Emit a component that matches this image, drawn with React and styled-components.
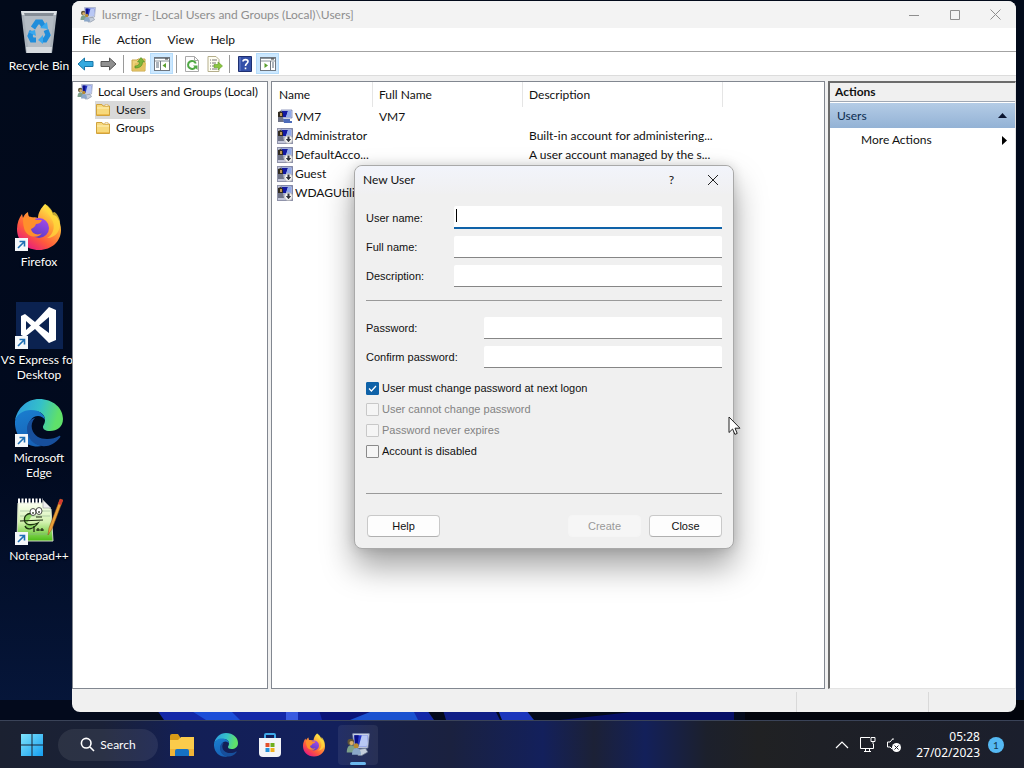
import React from "react";
import styled, {createGlobalStyle, css} from "styled-components";

const GlobalStyle = createGlobalStyle`
* {
  box-sizing: border-box;
}
html, body, #root {
  height: 100%;
}
body {
  margin: 0;
  overflow: hidden;
  font-family: Lato, "Open Sans", sans-serif;
  font-size: 12px;
  line-height: 16px;
  color: #111;
  cursor: default;
}
button, input {
  font: inherit;
  color: inherit;
  margin: 0;
  padding: 0;
  border: 0;
  background: none;
}
svg {
  display: block;
  flex: none;
}`;

/* ---------- DESKTOP ---------- */

const Screen = styled.div`
display: flex;
flex-direction: column;
height: 100vh;
background: linear-gradient(180deg, #020a1a 0%, #010a1f 60%, #06163a 92%, #030a1c 100%);
`;

const Workspace = styled.main`
position: relative;
display: flex;
flex: 1;
min-height: 0;
padding: 1px 8px 8px 0;
`;

const Wallpaper = styled.svg`
position: absolute;
left: 0;
bottom: 0;
width: 100%;
height: 20px;
`;

const DesktopIcons = styled.nav`
position: relative;
width: 72px;
flex: none;
`;

const IconGrid = styled.div`
display: grid;
width: 78px;
grid-template-columns: 78px;
grid-auto-rows: 98px;
`;

const Shortcut = styled.button`
position: relative;
grid-row: ${props => props.$row};
display: flex;
flex-direction: column;
align-items: center;
justify-content: flex-start;
gap: 3px;
padding-top: 6px;
color: white;
line-height: 15px;
white-space: pre;
text-shadow: 0 1px 2px black;
`;

const ShortcutArrow = styled.svg`
position: absolute;
left: 15px;
top: 41px;
`;

const Taskbar = styled.footer`
display: flex;
align-items: center;
height: 48px;
flex: none;
padding: 0 20px 0 14px;
border-top: 1px solid #3a4358;
color: white;
background: linear-gradient(90deg, #1b2131 0%, #1a2137 10%, #131f56 18%, #13205c 33%, #182148 37%, #1a213f 44%, #13205c 53%, #1c2136 58%, #13205a 63%, #1c202c 69%, #202123 74%, #1e2026 80%, #1b1f2d 100%);
`;

const StartButton = styled.button`
display: grid;
place-items: center;
width: 36px;
height: 40px;
margin-right: 8px;
`;

const SearchButton = styled.button`
display: flex;
align-items: center;
justify-content: center;
gap: 5px;
width: 100px;
height: 32px;
border-radius: 16px;
background: rgba(255, 255, 255, 0.08);
`;

const TaskButton = styled.button`
position: relative;
display: grid;
place-items: center;
width: 40px;
height: 40px;
margin-left: 4px;
border-radius: 4px;
${props => props.$active && css`
  background: rgba(255, 255, 255, 0.07);
  &::after {
    content: "";
    position: absolute;
    left: 12px;
    bottom: 0;
    width: 16px;
    height: 3px;
    border-radius: 2px;
    background: #6cb8ee;
  }
`}
`;

const Tray = styled.div`
display: flex;
align-items: center;
margin-left: auto;
`;

const TrayIcons = styled.div`
display: flex;
align-items: center;
gap: 10px;
`;

const Clock = styled.time`
margin: 0 8px 0 14px;
text-align: right;
font-family: "Noto Sans", "Open Sans", sans-serif;
`;

const Notice = styled.button`
width: 16px;
height: 16px;
border-radius: 50%;
background: #55b9f3;
color: #12384f;
font-size: 10px;
line-height: 16px;
`;

/* ---------- CONSOLE WINDOW ---------- */

const Window = styled.section`
position: relative;
display: flex;
flex-direction: column;
flex: 1;
min-width: 0;
border-radius: 8px;
background: #f0f0f0;
`;

const TitleBar = styled.header`
display: flex;
align-items: center;
gap: 6px;
height: 27px;
flex: none;
padding-left: 8px;
border-radius: 8px 8px 0 0;
background: #f3f3f3;
color: #8e8e8e;
`;

const WindowControls = styled.div`
display: flex;
margin-left: auto;
`;

const WindowControl = styled.button`
display: grid;
place-items: center;
width: 41px;
height: 27px;
`;

const MenuBar = styled.nav`
display: flex;
height: 24px;
flex: none;
padding-left: 2px;
border-bottom: 1px solid #a3a3a3;
background: white;
`;

const MenuItem = styled.button`
padding: 0 8px;
`;

const ToolBar = styled.div`
display: flex;
align-items: center;
height: 24px;
flex: none;
padding-left: 2px;
border-bottom: 1px solid #dcdcdc;
background: white;
`;

const ToolButton = styled.button`
display: grid;
place-items: center;
width: 23px;
height: 21px;
${props => props.$on && css`
  background: #cce8ff;
  box-shadow: inset 0 0 0 1px #b5dcfb;
`}
`;

const ToolDivider = styled.span`
width: 1px;
height: 18px;
margin: 0 3px;
background: #9a9a9a;
`;

const Panels = styled.div`
display: flex;
flex: 1;
min-height: 0;
gap: 3px;
padding-top: 5px;
`;

const Tree = styled.nav`
display: flex;
flex-direction: column;
align-items: flex-start;
width: 196px;
flex: none;
padding: 1px 0 0 4px;
border: 1px solid #828790;
background: white;
`;

const TreeNode = styled.button`
display: flex;
align-items: center;
gap: 5px;
height: 18px;
padding-right: 4px;
margin-left: ${props => props.$level * 18}px;
white-space: nowrap;
background: ${props => props.$selected ? "#d9d9d9" : "transparent"};
`;

const ListPanel = styled.div`
flex: 1;
min-width: 0;
overflow: hidden;
border: 1px solid #828790;
background: white;
`;

const UserTable = styled.table`
width: 100%;
table-layout: fixed;
border-collapse: separate;
border-spacing: 0;

th {
  height: 25px;
  padding: 0 6px;
  text-align: left;
  font-weight: normal;
  border-right: 1px solid #e5e5e5;
}
th:first-child {
  padding-left: 7px;
}
th:last-child {
  border-right: 0;
}
td {
  height: 19px;
  padding: 0 6px;
  white-space: nowrap;
}
td:first-child {
  padding: 0 0 0 5px;
}`;

const UserName = styled.span`
display: flex;
align-items: center;
gap: 2px;
`;

const ActionsPanel = styled.aside`
width: 188px;
flex: none;
border-top: 2px solid #6b6b6b;
border-left: 2px solid #6b6b6b;
border-right: 1px solid #e3e3e3;
border-bottom: 1px solid #e3e3e3;
background: white;
`;

const ActionsTitle = styled.h2`
margin: 0;
padding: 1px 5px;
height: 19px;
font-size: 12px;
line-height: 16px;
background: #f0f0f0;
border-bottom: 1px solid #a0a8b4;
`;

const ActionsGroup = styled.button`
display: flex;
align-items: center;
justify-content: space-between;
width: 100%;
height: 26px;
padding: 0 8px 0 7px;
border-top: 1px solid white;
color: #0c2c50;
background: linear-gradient(#b4cce6, #93b2d5);
`;

const ActionsItem = styled.button`
display: flex;
align-items: center;
justify-content: space-between;
width: 100%;
height: 24px;
padding: 0 8px 0 31px;
`;

const StatusBar = styled.footer`
display: flex;
justify-content: flex-end;
height: 23px;
flex: none;
padding-top: 3px;

span {
  border-left: 1px solid #d9d9d9;
}
span:first-child {
  width: 132px;
}
span:last-child {
  width: 88px;
}`;

/* ---------- NEW USER DIALOG ---------- */

const Dialog = styled.form`
position: absolute;
left: 282px;
top: 164px;
width: 380px;
border: 1px solid #a9a9a9;
border-radius: 8px;
background: #f0f0f0;
box-shadow: 0 18px 32px rgba(0, 0, 0, 0.36), 0 0 12px rgba(0, 0, 0, 0.14);
font-family: "Liberation Sans", Arial, sans-serif;
font-size: 11px;
line-height: 14px;
`;

const DialogTitle = styled.header`
display: flex;
align-items: center;
height: 28px;
padding-left: 8px;
border-radius: 8px 8px 0 0;
background: linear-gradient(#f2f4fb, #f0f0f1);
font-family: Lato, "Open Sans", sans-serif;
font-size: 12px;
line-height: 16px;
`;

const DialogBody = styled.div`
padding: 12px 11px 11px;
`;

const FieldGroup = styled.div`
display: flex;
flex-direction: column;
gap: 7px;
`;

const Field = styled.div`
position: relative;
display: grid;
grid-template-columns: ${props => props.$labelWidth}px 1fr;
align-items: center;
`;

const TextBox = styled.input`
width: 100%;
height: 22px;
padding: 0 4px;
border-bottom: 1px solid #868686;
border-radius: 2px 2px 0 0;
background: white;
outline: none;
${props => props.$focused && css`
  height: 23px;
  border-bottom: 2px solid #0f62a8;
`}
`;

const Caret = styled.span`
position: absolute;
left: 90px;
top: 3px;
width: 1px;
height: 13px;
background: black;
`;

const Rule = styled.hr`
height: 1px;
margin: ${props => props.$above}px 0 ${props => props.$below}px;
border: 0;
background: #9a9a9a;
`;

const CheckList = styled.div`
display: flex;
flex-direction: column;
gap: 7px;
margin-top: 13px;
`;

const CheckRow = styled.label`
display: flex;
align-items: center;
gap: 3px;
color: ${props => props.$disabled ? "#838383" : "#111"};
`;

const CheckBox = styled.input`
appearance: none;
width: 13px;
height: 13px;
border: 1px solid #8a8a8a;
border-radius: 1px;
background: #f5f5f5;
&:disabled {
  border-color: #c8c8c8;
}
&:checked {
  border-color: #0f62a8;
  background: #0f62a8 url("data:image/svg+xml,%3Csvg xmlns='http://www.w3.org/2000/svg' viewBox='0 0 11 11'%3E%3Cpath d='M2 5.5 4.4 8 9 3' fill='none' stroke='white' stroke-width='1.2'/%3E%3C/svg%3E");
}`;

const Buttons = styled.div`
display: flex;
gap: 8px;
padding: 0 0 0 1px;
`;

const PushButton = styled.button`
width: 73px;
height: 22px;
border: 1px solid #c9c9c9;
border-bottom-color: #b0b0b0;
border-radius: 4px;
background: #fdfdfd;
&:first-child {
  margin-right: auto;
}
&:disabled {
  border-color: #f5f5f5;
  background: #f6f6f6;
  color: #999;
}`;

const Pointer = styled.svg`
position: absolute;
left: 656px;
top: 415px;
`;

/* ---------- ICONS ---------- */

const UsersIcon = ({size = 16}) => (
  <svg width={size} height={size} viewBox="0 0 16 16">
    <path d="M4.500.5h11l-1 9.500H5.500z" fill="#dde3f2" stroke="#8c98b8" strokeWidth=".6"/>
    <path d="M5.500 1.500h9l-.6 7.500H6z" fill="#2335c4"/>
    <path d="M5.500 1.500h3l-1 7.500H6z" fill="#0a0f86"/>
    <path d="M10.500 1.500h4l-.6 7.500H8.500z" fill="#b9c8f4"/>
    <path d="M8 11l5-.8 1.500 2.500-4 2.300H8z" fill="#c5cedb" stroke="#6e7b90" strokeWidth=".5"/>
    <circle cx="3.200" cy="6" r="2.200" fill="#5e5236"/>
    <circle cx="3.700" cy="6.700" r="1.400" fill="#d9b06a"/>
    <path d="M.5 13c0-3 1-4.800 3-4.800s3 1.800 3 4.800z" fill="#7da08a"/>
    <circle cx="6.800" cy="8.500" r="1.700" fill="#b98a30"/>
    <path d="M4 14.500c0-2.500 1-4.500 3-4.500s3 2 3 4.500z" fill="#8ba7c9"/>
  </svg>
);

const AccountIcon = ({down}) => (
  <svg width="16" height="16" viewBox="0 0 16 16">
    {down ? <rect x=".5" y=".5" width="15" height="15" fill="#c3c6da" stroke="#9093aa"/> : null}
    <path d="M4 1h11v8H5z" fill="#cbd6f3" stroke="#6874a8" strokeWidth=".7"/>
    <path d="M5 2h6l-2 6H5z" fill="#1319a0"/>
    <path d="M11 2h3v6H9z" fill="#8fa8ea"/>
    <path d="M1 3l3-1 2 2v4H1z" fill="#332c21"/>
    <path d="M3 4h2v3H3z" fill="#c39a55"/>
    <path d="M1 8h5l1 5H1z" fill="#6f7488"/>
    {down
      ? <g>
        <circle cx="11.500" cy="11.500" r="4" fill="#f5f5f5" stroke="#a6a6a6" strokeWidth=".6"/>
        <path d="M10.500 8.500h2v2.500h1.700l-2.700 3.200L8.800 11h1.700z" fill="#30333c"/>
      </g>
      : <path d="M6 10h7v2h2v2H7z" fill="#4d6cba"/>}
  </svg>
);

const FolderIcon = () => (
  <svg width="16" height="16" viewBox="0 0 16 16">
    <path d="M1.500 13.500v-11H7l1 1.500h6.500v9.500z" fill="#f7d97c" stroke="#d0a23c"/>
    <path d="M2 6h12" stroke="#fff1ba"/>
    <path d="M10 2.500h3v1.500h-3z" fill="#fff" stroke="#d0a23c" strokeWidth=".5"/>
    <path d="M2 12.500h12" stroke="#eebd50"/>
  </svg>
);

const ArrowIcon = ({back}) => (
  <svg width="17" height="16" viewBox="0 0 17 16">
    <path
      d={back ? "M1 8l6.500-6v3.500H16v5H7.500V14z" : "M16 8L9.500 2v3.500H1v5h8.500V14z"}
      fill={back ? "#35aadf" : "#909090"}
      stroke={back ? "#1877a8" : "#555"}
      strokeLinejoin="round"
    />
  </svg>
);

const UpFolderIcon = () => (
  <svg width="16" height="16" viewBox="0 0 16 16">
    <path d="M1 15V4h5l1-1h7v12z" fill="#eed27a" stroke="#c8a548"/>
    <path d="M1.500 14.500L4 7h11l-1.500 7.500z" fill="#e4c261"/>
    <path d="M4 10c3 0 4.500-1.500 4.500-4H6.500L10 1.500 13.500 6h-2c0 4-2.500 6-7.500 6z" fill="#7db53a" stroke="#4c8b20" strokeWidth=".6"/>
  </svg>
);

const PaneIcon = ({right}) => (
  <svg width="16" height="14" viewBox="0 0 16 14">
    <rect x=".5" y=".5" width="15" height="13" fill="white" stroke="#6f7780"/>
    <path d="M1 1.500h14M1 4h14" stroke="#8b949c"/>
    <path d="M11 2h3" stroke="#333"/>
    <path d={right ? "M10.500 4v9" : "M6.500 4v9"} stroke="#6f7780"/>
    <path d={right ? "M12 6h2M12 8h2M12 10h2" : "M2 6h3M2 8h3M2 10h3"} stroke="#596879"/>
    <path d={right ? "M4.500 6v5L8 8.500z" : "M12 6v5L8.500 8.500z"} fill="#5ba02d"/>
  </svg>
);

const RefreshIcon = () => (
  <svg width="14" height="16" viewBox="0 0 14 16">
    <path d="M.5.5h9l4 4v11H.5z" fill="#fdfdfd" stroke="#a9a9a9"/>
    <path d="M9.500.5v4h4" fill="none" stroke="#a9a9a9"/>
    <path d="M10.500 11a4 4 0 1 1 .3-3.500" fill="none" stroke="#4fa845" strokeWidth="2"/>
    <path d="M8 9.500h4.500v4.500z" fill="#4fa845"/>
  </svg>
);

const ExportIcon = () => (
  <svg width="16" height="16" viewBox="0 0 16 16">
    <path d="M1 .5h8l3 3v12H1z" fill="#fffef2" stroke="#b5ae8c"/>
    <path d="M3 4h1M3 7h1M3 10h1M3 13h1M5 4h5M5 7h4M5 10h3M5 13h5" stroke="#777"/>
    <path d="M7 8.500h4V6l4.500 4-4.500 4v-2.500H7z" fill="#8cc63f" stroke="#5a9a26" strokeWidth=".6"/>
  </svg>
);

const HelpIcon = () => (
  <svg width="14" height="16" viewBox="0 0 14 16">
    <path d="M.5.500h13v15H.5z" fill="#3450a8" stroke="#1e2f70"/>
    <path d="M2 1v14" stroke="#6e86cf"/>
    <path d="M5 5.500C5 3 10 3 10 5.500c0 2-2.500 2-2.500 4.500M7.500 11.500v1.800" fill="none" stroke="white" strokeWidth="1.600"/>
  </svg>
);

const RecycleBin = () => (
  <svg width="48" height="48" viewBox="0 0 48 48">
    <path d="M6 4h36l-5 42H11z" fill="#a9b1b9"/>
    <path d="M6 4h36l-1 4H7z" fill="#dde2e6"/>
    <path d="M9 6h30l-1 3H10z" fill="#858d96"/>
    <path d="M9 9h30l-4 31H13z" fill="#b4bcc4"/>
    <path d="M11 40h26l-1 6H12z" fill="#d7dbdf"/>
    <g fill="none" stroke="#1f8ddb" strokeWidth="5">
      <path d="M18 21l4-6h4l3 5"/>
      <path d="M31 23l2 5-3 5h-3"/>
      <path d="M21 33h-4l-2-4 2-5"/>
    </g>
    <path d="M25 21l8 1-1-7zM28 28v9l-5-4zM13 25l7-2 1 6z" fill="#3aa9ef"/>
  </svg>
);

const FirefoxIcon = ({size = 48, id}) => (
  <svg width={size} height={size} viewBox="0 0 48 48">
    <defs>
      <linearGradient id={`${id}a`} x1=".85" y1=".1" x2=".25" y2=".95">
        <stop offset="0" stopColor="#fff44f"/>
        <stop offset=".35" stopColor="#ffa436"/>
        <stop offset=".7" stopColor="#ff5a3c"/>
        <stop offset="1" stopColor="#e81e7c"/>
      </linearGradient>
      <linearGradient id={`${id}b`} x1=".7" y1="0" x2=".3" y2="1">
        <stop offset="0" stopColor="#a24be8"/>
        <stop offset="1" stopColor="#5b3bc4"/>
      </linearGradient>
    </defs>
    <path d="M30 1c4 3 7 7 8 11 2 0 3 1 4 2 3 5 4 9 4 13 0 11-9 20-22 20S2 38 2 26c0-6 2-11 5-15l1 4c1-3 3-5 5-6 0 3 1 5 2 6 3-1 6-1 8 0 0-5 3-10 7-14z" fill={`url(#${id}a)`}/>
    <circle cx="24" cy="25" r="10" fill={`url(#${id}b)`}/>
    <path d="M8 15c5-3 10-1 13 2h6c-1 3-4 4-6 4-1 3-3 4-5 5 1 5 7 7 11 4-3 6-16 5-18-5-1-4-1-7-1-10z" fill="#ff8f2c"/>
    <path d="M30 1c-1 7 6 12 8 18 2 5 0 13-6 16 9 0 14-8 13-17-2-7-6-11-7-8-1-3-4-7-8-9z" fill="#ffd93b" opacity=".75"/>
  </svg>
);

const VisualStudioIcon = () => (
  <svg width="48" height="48" viewBox="0 0 48 48">
    <rect x="1" y="1" width="47" height="47" fill="#0b2250"/>
    <path fillRule="evenodd" d="M6 15l4-2 10 8L34 6l7 3v30l-7 3-14-14-10 8-4-2zM11 20v9l5-4.500zM34 16L24 24.500 34 32z" fill="white"/>
  </svg>
);

const EdgeIcon = ({size = 48, id}) => (
  <svg width={size} height={size} viewBox="0 0 48 48">
    <defs>
      <linearGradient id={`${id}a`} x1="0" y1=".3" x2="1" y2=".5">
        <stop offset="0" stopColor="#2c9be0"/>
        <stop offset=".5" stopColor="#35c1c8"/>
        <stop offset=".9" stopColor="#5fe06a"/>
      </linearGradient>
      <linearGradient id={`${id}b`} x1="0" y1="0" x2=".3" y2="1">
        <stop offset="0" stopColor="#1a7fd0"/>
        <stop offset="1" stopColor="#1763b8"/>
      </linearGradient>
    </defs>
    <path d="M0 22C2 9 12 0 24 0c14 0 24 9 24 20 0 8-6 12-13 12-5 0-7-2-7-4s2-3 2-7c0-5-4-9-11-9C9 12 2 16 0 22z" fill={`url(#${id}a)`}/>
    <path d="M0 22c2-7 8-11 16-11 9 0 14 5 14 10-1-2-4-4-7-4-6 0-10 6-10 13 0 8 6 15 14 17-15 3-28-9-27-25z" fill={`url(#${id}b)`}/>
    <path d="M20 19c-3 3-4 7-3 11 2 7 8 10 15 10 5 0 9-1 12-3 1-.5 2 .5 1 1.500C40 45 33 48 27 47c-9-1-15-8-15-17 0-6 3-10 8-11z" fill="#174f9c"/>
  </svg>
);

const NotepadIcon = () => (
  <svg width="48" height="48" viewBox="0 0 48 48">
    <defs>
      <linearGradient id="npad" x1="0" y1="0" x2="0" y2="1">
        <stop offset="0" stopColor="#fbfff0"/>
        <stop offset=".5" stopColor="#d3f2b0"/>
        <stop offset="1" stopColor="#4cbc14"/>
      </linearGradient>
    </defs>
    <path d="M3 6h25l8 6 2 32H2z" fill="url(#npad)" stroke="#cfd8c3"/>
    <path d="M3 4h25" stroke="white" strokeWidth="5" strokeDasharray="2 1.500"/>
    <path d="M28 3v8h8z" fill="#eee" stroke="#999" strokeWidth=".6"/>
    <path d="M5 14h30M5 19h30M5 37h29" stroke="#8fb38a" strokeWidth=".6"/>
    <path d="M18 17c-6-2-10 3-8 8 2 4 9 3 13 1-4 6-11 8-13 3" fill="#8dd665" stroke="#1c3210" strokeWidth="1.300"/>
    <ellipse cx="18" cy="15" rx="3" ry="3.500" fill="white" stroke="#222" strokeWidth=".8"/>
    <ellipse cx="24" cy="14" rx="3" ry="3.500" fill="white" stroke="#222" strokeWidth=".8"/>
    <path d="M18 15v2M24 14v2M5 24l23-1M21 20h6M19 29v6M23 31v3M27 31v3M21 33h8" stroke="#19240f" strokeWidth="1.200"/>
    <path d="M45 2l3 1-11 29-4 6 1-7z" fill="#eaa13a" stroke="#8b4b16" strokeWidth=".5"/>
    <path d="M45 2l3 1-2 5-3-1z" fill="#d43a30"/>
  </svg>
);

const StartIcon = () => (
  <svg width="24" height="24" viewBox="0 0 24 24">
    <defs>
      <linearGradient id="win" x1="0" y1="0" x2="1" y2="1">
        <stop offset="0" stopColor="#7fe3fb"/>
        <stop offset="1" stopColor="#159ef0"/>
      </linearGradient>
    </defs>
    <path d="M1 1h10.500v10.500H1zM12.500 1H23v10.500H12.500zM1 12.500h10.500V23H1zM12.500 12.500H23V23H12.500z" fill="url(#win)"/>
  </svg>
);

const ExplorerIcon = () => (
  <svg width="26" height="24" viewBox="0 0 26 24">
    <path d="M1 3q0-2 2-2h6l2 3v4H1z" fill="#d99a16"/>
    <path d="M1 7l8 0 3-3h13v19H1z" fill="#fbcb4b"/>
    <path d="M1 16h24v7H1z" fill="#f0b437"/>
    <path d="M6 23v-5q0-2 2-2h10q2 0 2 2v5z" fill="#1672c4"/>
  </svg>
);

const StoreIcon = () => (
  <svg width="24" height="24" viewBox="0 0 24 24">
    <path d="M7 6V2q0-1 1-1h8q1 0 1 1v4" fill="none" stroke="#3fa9e8" strokeWidth="2"/>
    <path d="M1 5h22v15q0 4-4 4H5q-4 0-4-4z" fill="#f3f4f7"/>
    <path d="M7.500 10h4v4h-4z" fill="#e2502a"/>
    <path d="M12.500 10h4v4h-4z" fill="#6eaf1e"/>
    <path d="M7.500 15h4v4h-4z" fill="#2290d8"/>
    <path d="M12.500 15h4v4h-4z" fill="#f2b01d"/>
  </svg>
);

/* ---------- DATA ---------- */

const shortcuts = [
  {label: "Recycle Bin", row: 1, icon: <RecycleBin/>},
  {label: "Firefox", row: 3, icon: <FirefoxIcon id="fxd"/>, linked: true},
  {label: "VS Express for\nDesktop", row: 4, icon: <VisualStudioIcon/>, linked: true},
  {label: "Microsoft\nEdge", row: 5, icon: <EdgeIcon id="edd"/>, linked: true},
  {label: "Notepad++", row: 6, icon: <NotepadIcon/>, linked: true}
];

const users = [
  {name: "VM7", fullName: "VM7", description: ""},
  {name: "Administrator", fullName: "", description: "Built-in account for administering...", down: true},
  {name: "DefaultAcco...", fullName: "", description: "A user account managed by the s...", down: true},
  {name: "Guest", fullName: "", description: "", down: true},
  {name: "WDAGUtility...", fullName: "", description: "", down: true}
];

const identityFields = [
  {id: "userName", label: "User name:", focused: true},
  {id: "fullName", label: "Full name:"},
  {id: "description", label: "Description:"}
];

const passwordFields = [
  {id: "password", label: "Password:"},
  {id: "confirm", label: "Confirm password:"}
];

const options = [
  {label: "User must change password at next logon", checked: true},
  {label: "User cannot change password", disabled: true},
  {label: "Password never expires", disabled: true},
  {label: "Account is disabled"}
];

const NewUserDialog = () => (
  <Dialog role="dialog" aria-label="New User" onSubmit={event => event.preventDefault()}>
    <DialogTitle>
      New User
      <WindowControls>
        <WindowControl type="button">?</WindowControl>
        <WindowControl type="button" aria-label="Close dialog">
          <svg width="12" height="12" viewBox="0 0 12 12"><path d="M1 1l10 10M11 1L1 11" stroke="#222"/></svg>
        </WindowControl>
      </WindowControls>
    </DialogTitle>

    <DialogBody>
      <FieldGroup>
        {identityFields.map(field =>
          <Field key={field.id} $labelWidth={88}>
            <label htmlFor={field.id}>{field.label}</label>
            <TextBox id={field.id} type="text" $focused={field.focused}/>
            {field.focused ? <Caret/> : null}
          </Field>
        )}
      </FieldGroup>

      <Rule $above={13} $below={16}/>

      <FieldGroup>
        {passwordFields.map(field =>
          <Field key={field.id} $labelWidth={118}>
            <label htmlFor={field.id}>{field.label}</label>
            <TextBox id={field.id} type="password"/>
          </Field>
        )}
      </FieldGroup>

      <CheckList>
        {options.map(option =>
          <CheckRow key={option.label} $disabled={option.disabled}>
            <CheckBox type="checkbox" defaultChecked={option.checked} disabled={option.disabled}/>
            {option.label}
          </CheckRow>
        )}
      </CheckList>

      <Rule $above={35} $below={21}/>

      <Buttons>
        <PushButton type="button">Help</PushButton>
        <PushButton type="submit" disabled>Create</PushButton>
        <PushButton type="button">Close</PushButton>
      </Buttons>
    </DialogBody>
  </Dialog>
);

const ConsoleWindow = () => (
  <Window>
    <TitleBar>
      <UsersIcon/>
      lusrmgr - [Local Users and Groups (Local)\Users]
      <WindowControls>
        <WindowControl aria-label="Minimize">
          <svg width="10" height="10" viewBox="0 0 10 10"><path d="M0 5.500h10" stroke="#8e8e8e"/></svg>
        </WindowControl>
        <WindowControl aria-label="Maximize">
          <svg width="10" height="10" viewBox="0 0 10 10"><path d="M.5.500h9v9h-9z" fill="none" stroke="#8e8e8e"/></svg>
        </WindowControl>
        <WindowControl aria-label="Close">
          <svg width="11" height="11" viewBox="0 0 11 11"><path d="M.5.500l10 10M10.500.5l-10 10" stroke="#8e8e8e"/></svg>
        </WindowControl>
      </WindowControls>
    </TitleBar>

    <MenuBar>
      {["File", "Action", "View", "Help"].map(item => <MenuItem key={item}>{item}</MenuItem>)}
    </MenuBar>

    <ToolBar>
      <ToolButton aria-label="Back"><ArrowIcon back/></ToolButton>
      <ToolButton aria-label="Forward"><ArrowIcon/></ToolButton>
      <ToolDivider/>
      <ToolButton aria-label="Up one level"><UpFolderIcon/></ToolButton>
      <ToolButton aria-label="Console tree" $on><PaneIcon/></ToolButton>
      <ToolDivider/>
      <ToolButton aria-label="Refresh"><RefreshIcon/></ToolButton>
      <ToolButton aria-label="Export list"><ExportIcon/></ToolButton>
      <ToolDivider/>
      <ToolButton aria-label="Help topics"><HelpIcon/></ToolButton>
      <ToolButton aria-label="Action pane" $on><PaneIcon right/></ToolButton>
    </ToolBar>

    <Panels>
      <Tree>
        <TreeNode $level={0}><UsersIcon/>Local Users and Groups (Local)</TreeNode>
        <TreeNode $level={1} $selected><FolderIcon/>Users</TreeNode>
        <TreeNode $level={1}><FolderIcon/>Groups</TreeNode>
      </Tree>

      <ListPanel>
        <UserTable>
          <colgroup>
            <col width="101"/>
            <col width="150"/>
            <col width="200"/>
            <col/>
          </colgroup>
          <thead>
            <tr>
              <th>Name</th>
              <th>Full Name</th>
              <th>Description</th>
              <th/>
            </tr>
          </thead>
          <tbody>
            {users.map(user =>
              <tr key={user.name}>
                <td><UserName><AccountIcon down={user.down}/>{user.name}</UserName></td>
                <td>{user.fullName}</td>
                <td>{user.description}</td>
                <td/>
              </tr>
            )}
          </tbody>
        </UserTable>
      </ListPanel>

      <ActionsPanel>
        <ActionsTitle>Actions</ActionsTitle>
        <ActionsGroup>
          Users
          <svg width="9" height="5" viewBox="0 0 9 5"><path d="M0 5l4.500-5L9 5z" fill="#0a1430"/></svg>
        </ActionsGroup>
        <ActionsItem>
          More Actions
          <svg width="5" height="9" viewBox="0 0 5 9"><path d="M0 0l5 4.500L0 9z" fill="black"/></svg>
        </ActionsItem>
      </ActionsPanel>
    </Panels>

    <StatusBar>
      <span/>
      <span/>
    </StatusBar>

    <NewUserDialog/>

    <Pointer width="13" height="20" viewBox="0 0 13 20">
      <path d="M1 1v15.500l3.600-3.500 2.300 5.400 2.300-1L7 12.200h5z" fill="white" stroke="#222"/>
    </Pointer>
  </Window>
);

const App = () => (
  <>
    <GlobalStyle/>
    <Screen>
      <Workspace>
        <Wallpaper viewBox="0 0 1024 20" preserveAspectRatio="none" aria-hidden="true">
          <path d="M0 0h1024v20H0z" fill="#030a1c"/>
          <path d="M150 0h270l14 20H164z" fill="#1428a8"/>
          <path d="M190 10h40l10 10h-34z" fill="#1d4fd8"/>
          <path d="M286 0h12v20h-12z" fill="#3a5be0"/>
          <path d="M316 0h90l6 20h-90z" fill="#0a1478"/>
          <path d="M350 20l30-12h32l6 12z" fill="#1a52d0"/>
          <path d="M440 0h50l10 20h-54z" fill="#101f86"/>
          <path d="M494 0h24l16 20h-32z" fill="#1b36bc"/>
          <path d="M560 20l90-10h84v10z" fill="#060f66"/>
          <path d="M745 0h279v20H745z" fill="#02040c"/>
        </Wallpaper>

        <DesktopIcons>
          <IconGrid>
            {shortcuts.map(item =>
              <Shortcut key={item.label} $row={item.row}>
                {item.icon}
                {item.linked
                  ? <ShortcutArrow width="13" height="13" viewBox="0 0 13 13">
                    <path d="M0 0h13v13H0z" fill="#f4f7fa"/>
                    <path d="M3 10l6-6M4.500 3.500h5v5" fill="none" stroke="#1e6fb4" strokeWidth="1.600"/>
                  </ShortcutArrow>
                  : null}
                {item.label}
              </Shortcut>
            )}
          </IconGrid>
        </DesktopIcons>

        <ConsoleWindow/>
      </Workspace>

      <Taskbar>
        <StartButton aria-label="Start"><StartIcon/></StartButton>
        <SearchButton>
          <svg width="15" height="15" viewBox="0 0 15 15">
            <path d="M10 10l4 4M11 6.200a4.800 4.800 0 1 1-9.600 0 4.800 4.800 0 0 1 9.600 0z" fill="none" stroke="white" strokeWidth="1.600"/>
          </svg>
          Search
        </SearchButton>
        <TaskButton aria-label="File Explorer"><ExplorerIcon/></TaskButton>
        <TaskButton aria-label="Edge"><EdgeIcon size={24} id="edt"/></TaskButton>
        <TaskButton aria-label="Store"><StoreIcon/></TaskButton>
        <TaskButton aria-label="Firefox"><FirefoxIcon size={24} id="fxt"/></TaskButton>
        <TaskButton aria-label="Local Users and Groups" $active><UsersIcon size={24}/></TaskButton>

        <Tray>
          <TrayIcons>
            <svg width="14" height="8" viewBox="0 0 14 8"><path d="M1 7l6-6 6 6" fill="none" stroke="white" strokeWidth="1.200"/></svg>
            <svg width="17" height="17" viewBox="0 0 17 17">
              <path d="M11 1.500H1.500v11h13V8M5 15.500h7M6.500 12.500v3M10.500 12.500v3M12 1.500h4v4h-4zM14 5.500V8" fill="none" stroke="white"/>
            </svg>
            <svg width="16" height="16" viewBox="0 0 16 16">
              <path d="M7 3V1.500L4 5H1.500v5H4l2 2" fill="none" stroke="white"/>
              <circle cx="10.500" cy="10.500" r="4.500" fill="white"/>
              <path d="M8.500 8.500l4 4M12.500 8.500l-4 4" stroke="#20222a"/>
            </svg>
          </TrayIcons>
          <Clock>05:28<br/>27/02/2023</Clock>
          <Notice aria-label="Notifications">1</Notice>
        </Tray>
      </Taskbar>
    </Screen>
  </>
);

export default App;
